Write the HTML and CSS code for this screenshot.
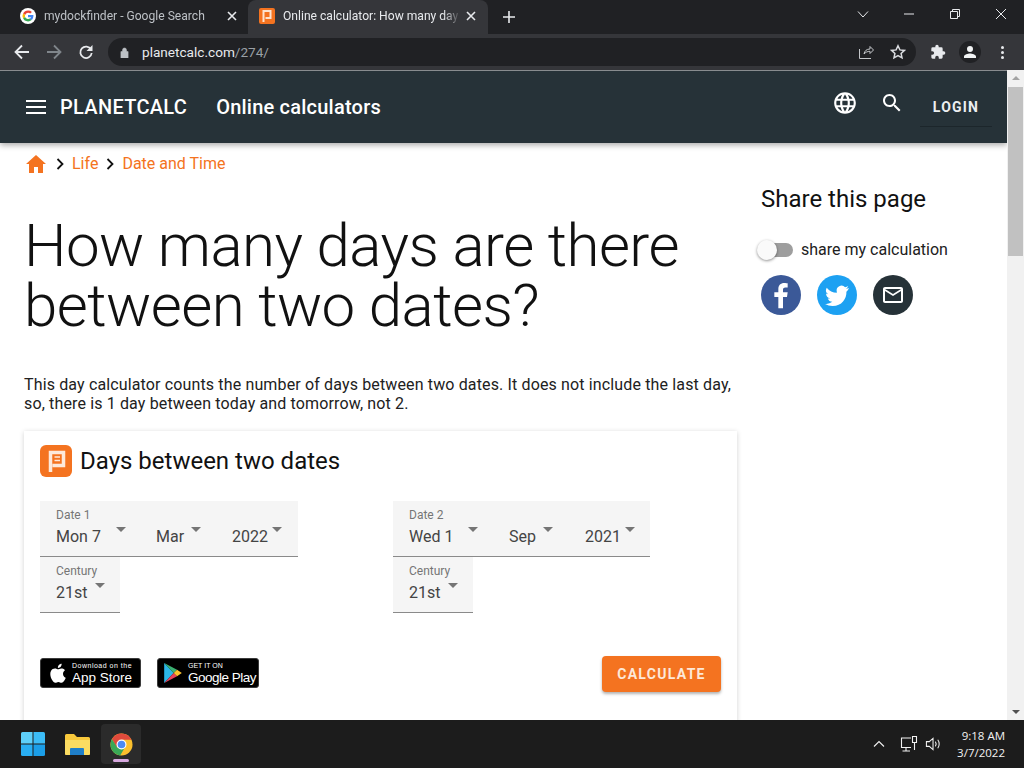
FILE: index.html
```html
<!DOCTYPE html>
<html>
<head lang="en">
    <meta charset="UTF-8">
    <title>Online calculator: How many days are there between two dates?</title>
    <link rel="stylesheet" href="styles.css">
</head>
<body>
<div class="tabbar">
    <div class="tab">
        <svg class="favicon" viewBox="0 0 16 16"><circle cx="8" cy="8" r="8" fill="#fff"/><path d="M8 2.500a5.500 5.500 0 0 0-4.900 3l2 1.600A3.300 3.300 0 0 1 8 4.700c.9 0 1.600.3 2.200.8l1.700-1.600A5.500 5.500 0 0 0 8 2.500z" fill="#ea4335"/><path d="M3.100 5.500a5.500 5.500 0 0 0 0 5l2-1.600a3.300 3.300 0 0 1 0-1.800z" fill="#fbbc05"/><path d="M3.100 10.500a5.500 5.500 0 0 0 8.600 1.500l-1.900-1.400a3.300 3.300 0 0 1-4.700-1.700z" fill="#34a853"/><path d="M13.400 7H8v2.200h3.100a2.600 2.600 0 0 1-1.300 1.400l1.900 1.400c1.100-1 1.800-2.600 1.700-5z" fill="#4285f4"/></svg>
        <span class="tab-title">mydockfinder - Google Search</span>
        <svg class="tab-x" viewBox="0 0 10 10"><path d="M1 1l8 8M9 1l-8 8"/></svg>
    </div>
    <div class="tab tab-on">
        <svg class="favicon" viewBox="0 0 16 16"><rect width="16" height="16" rx="2" fill="#f47320"/><path d="M4.500 14V3h7v7H6.500" fill="none" stroke="#fde3cf" stroke-width="2"/></svg>
        <span class="tab-title">Online calculator: How many day</span>
        <svg class="tab-x" viewBox="0 0 10 10"><path d="M1 1l8 8M9 1l-8 8"/></svg>
    </div>
    <svg class="newtab" viewBox="0 0 12 12"><path d="M6 0v12M0 6h12"/></svg>
    <div class="winbtns">
        <svg viewBox="0 0 12 12" class="win-chev"><path d="M1 3.500l5 5.500 5-5.500"/></svg>
        <svg viewBox="0 0 12 12" class="win-min"><path d="M1 6h10"/></svg>
        <svg viewBox="0 0 12 12" class="win-max"><path d="M1.500 3.500h7v7h-7zM3.500 3.500v-2h7v7h-2"/></svg>
        <svg viewBox="0 0 12 12" class="win-close"><path d="M1 1l10 10M11 1L1 11"/></svg>
    </div>
</div>

<div class="toolbar">
    <svg class="nav-ico" viewBox="0 0 16 16"><path d="M15 8H1.500M8 1.500L1.500 8 8 14.500"/></svg>
    <svg class="nav-ico nav-off" viewBox="0 0 16 16"><path d="M1 8h13.500M8 1.500L14.500 8 8 14.500"/></svg>
    <svg class="nav-ico" viewBox="0 0 16 16"><path d="M13 5.500A5.700 5.700 0 1 0 13.700 9"/><path class="nav-fill" d="M14.500 1v6h-6z"/></svg>
    <div class="omnibox">
        <svg class="lock" viewBox="0 0 10 12"><path d="M1 5h8v7H1zM2.800 5V3.200a2.200 2.200 0 0 1 4.400 0V5" /></svg>
        <span class="url">planetcalc.com<span class="url-path">/274/</span></span>
        <svg class="omni-share" viewBox="0 0 16 16"><path d="M1.500 5v9.500h11.500M6 10c.5-3 2.500-5 6-5V2.500L15.500 6 12 9.500V7.300c-2.500 0-4.500 1-6 2.700z"/></svg>
        <svg class="omni-star" viewBox="0 0 16 16"><path d="M8 1.800l1.900 4.100 4.500.5-3.300 3 .9 4.400L8 11.600l-4 2.200.9-4.400-3.300-3 4.500-.5z"/></svg>
    </div>
    <svg class="puzzle" viewBox="0 0 24 24"><path d="M20.500 11H19V7a2 2 0 0 0-2-2h-4V3.500a2.500 2.500 0 0 0-5 0V5H4a2 2 0 0 0-2 2v3.800h1.500a2.700 2.700 0 0 1 0 5.400H2V20a2 2 0 0 0 2 2h3.800v-1.500a2.700 2.700 0 0 1 5.400 0V22H17a2 2 0 0 0 2-2v-4h1.500a2.500 2.500 0 0 0 0-5z"/></svg>
    <div class="avatar"><svg viewBox="0 0 24 24"><path d="M12 12a4 4 0 1 0 0-8 4 4 0 0 0 0 8zm0 2c-2.700 0-8 1.300-8 4v2h16v-2c0-2.700-5.300-4-8-4z"/></svg></div>
    <div class="kebab"><i></i><i></i><i></i></div>
</div>

<div class="viewport">
    <div class="page">
        <header class="appbar">
            <svg class="burger" viewBox="0 0 20 14"><path d="M0 1h20M0 7h20M0 13h20"/></svg>
            <span class="brand">PLANETCALC</span>
            <span class="appbar-title">Online calculators</span>
            <svg class="globe" viewBox="0 0 24 24"><path d="M11.990 2C6.470 2 2 6.480 2 12s4.470 10 9.990 10C17.520 22 22 17.520 22 12S17.520 2 11.990 2zm6.930 6h-2.950c-.32-1.250-.78-2.450-1.380-3.560 1.840.63 3.370 1.910 4.330 3.560zM12 4.040c.83 1.200 1.480 2.530 1.910 3.960h-3.820c.43-1.430 1.080-2.760 1.910-3.960zM4.260 14C4.100 13.360 4 12.690 4 12s.1-1.360.26-2h3.380c-.08.66-.14 1.320-.14 2 0 .68.06 1.340.14 2H4.260zm.82 2h2.950c.32 1.250.78 2.450 1.380 3.560-1.840-.63-3.370-1.900-4.330-3.560zm2.950-8H5.080c.96-1.660 2.490-2.930 4.330-3.560C8.810 5.550 8.350 6.750 8.030 8zM12 19.960c-.83-1.200-1.480-2.530-1.910-3.960h3.820c-.43 1.430-1.080 2.760-1.910 3.960zM14.340 14H9.660c-.09-.66-.16-1.320-.16-2 0-.68.07-1.350.16-2h4.680c.09.65.16 1.320.16 2 0 .68-.07 1.340-.16 2zm.25 5.560c.6-1.110 1.060-2.310 1.380-3.560h2.950c-.96 1.650-2.490 2.930-4.330 3.560zM16.360 14c.08-.66.14-1.320.14-2 0-.68-.06-1.340-.14-2h3.380c.16.64.26 1.310.26 2s-.1 1.360-.26 2h-3.380z"/></svg>
            <svg class="search" viewBox="0 0 24 24"><path d="M15.500 14h-.79l-.28-.27C15.410 12.590 16 11.110 16 9.500 16 5.910 13.090 3 9.500 3S3 5.910 3 9.500 5.910 16 9.500 16c1.610 0 3.090-.59 4.230-1.570l.27.28v.79l5 4.990L20.490 19l-4.990-5zm-6 0C7.010 14 5 11.990 5 9.500S7.010 5 9.500 5 14 7.010 14 9.500 11.990 14 9.500 14z"/></svg>
            <span class="login">LOGIN</span>
        </header>

        <div class="content">
            <main class="main">
                <nav class="crumbs">
                    <svg class="home" viewBox="0 0 20 18"><path d="M8 18v-6h4v6h5V9h3L10 0 0 9h3v9z"/></svg>
                    <svg class="sep" viewBox="0 0 8 12"><path d="M1.500 1L6.500 6l-5 5"/></svg>
                    <a>Life</a>
                    <svg class="sep" viewBox="0 0 8 12"><path d="M1.500 1L6.500 6l-5 5"/></svg>
                    <a>Date and Time</a>
                </nav>
                <h1>How many days are there between two dates?</h1>
                <p class="intro">This day calculator counts the number of days between two dates. It does not include the last day, so, there is 1 day between today and tomorrow, not 2.</p>

                <section class="card">
                    <div class="card-head">
                        <svg class="card-logo" viewBox="0 0 32 32"><rect width="32" height="32" rx="6" fill="#f47320"/><path d="M10.500 27V7.500h13v13H12.500" fill="none" stroke="#fde9db" stroke-width="3.500"/><path d="M14.500 12h5.500M14.500 15.500h5.500" stroke="#fde9db" stroke-width="1.500"/></svg>
                        <h2>Days between two dates</h2>
                    </div>
                    <div class="dates">
                        <div class="date-col">
                            <div class="field">
                                <span class="lbl">Date 1</span>
                                <div class="vals">
                                    <span class="val val-day">Mon 7<i class="caret"></i></span>
                                    <span class="val val-mon">Mar<i class="caret"></i></span>
                                    <span class="val val-yr">2022<i class="caret"></i></span>
                                </div>
                            </div>
                            <div class="field field-small">
                                <span class="lbl">Century</span>
                                <div class="vals"><span class="val">21st<i class="caret"></i></span></div>
                            </div>
                        </div>
                        <div class="date-col">
                            <div class="field">
                                <span class="lbl">Date 2</span>
                                <div class="vals">
                                    <span class="val val-day">Wed 1<i class="caret"></i></span>
                                    <span class="val val-mon">Sep<i class="caret"></i></span>
                                    <span class="val val-yr">2021<i class="caret"></i></span>
                                </div>
                            </div>
                            <div class="field field-small">
                                <span class="lbl">Century</span>
                                <div class="vals"><span class="val">21st<i class="caret"></i></span></div>
                            </div>
                        </div>
                    </div>
                    <div class="card-foot">
                        <div class="badge badge-apple">
                            <svg viewBox="1 2 16 20"><path d="M14 12.700c0-2.300 1.900-3.400 2-3.500-1.100-1.600-2.800-1.800-3.400-1.800-1.400-.2-2.800.9-3.500.9s-1.900-.8-3.100-.8C4.400 7.500 2.900 8.400 2.100 9.800c-1.700 2.900-.4 7.200 1.200 9.500.8 1.200 1.800 2.400 3 2.400s1.700-.8 3.100-.8 1.900.8 3.100.8c1.300 0 2.100-1.100 2.900-2.300.9-1.300 1.300-2.600 1.300-2.700-.1 0-2.600-1-2.700-4zM11.700 5.700c.6-.8 1.100-1.900.9-3-.9 0-2.100.6-2.700 1.400-.6.700-1.100 1.800-1 2.800 1 .1 2.100-.5 2.800-1.200z"/></svg>
                            <div class="badge-text"><span class="badge-sm">Download on the</span><span class="badge-lg">App Store</span></div>
                        </div>
                        <div class="badge badge-play">
                            <svg viewBox="1 1.500 18.500 21"><path d="M1 1.500v21L11 12z" fill="#2bb6e8"/><path d="M1 1.500L11 12l3.500-3.500z" fill="#3bb273"/><path d="M1 22.500L11 12l3.500 3.500z" fill="#e8405a"/><path d="M14.500 8.500L11 12l3.500 3.500L19.500 12z" fill="#fbc02d"/></svg>
                            <div class="badge-text"><span class="badge-sm badge-caps">GET IT ON</span><span class="badge-lg">Google Play</span></div>
                        </div>
                        <button class="calc">CALCULATE</button>
                    </div>
                </section>
            </main>

            <aside class="side">
                <h3>Share this page</h3>
                <div class="share-toggle">
                    <span class="switch"><i></i></span>
                    <span>share my calculation</span>
                </div>
                <div class="socials">
                    <span class="social s-fb"><svg viewBox="0 0 24 24"><path d="M13.500 22v-8.500h3l.5-3.500h-3.500V8c0-1 .4-1.700 1.800-1.700H17V3.200c-.4 0-1.400-.2-2.600-.2-2.600 0-4.400 1.600-4.400 4.500V10H7v3.500h3V22z"/></svg></span>
                    <span class="social s-tw"><svg viewBox="0 0 24 24"><path d="M23 5.600c-.8.400-1.700.6-2.600.7.900-.6 1.600-1.400 2-2.500-.9.500-1.800.9-2.900 1.100A4.500 4.500 0 0 0 11.800 9c0 .4 0 .7.100 1A12.900 12.900 0 0 1 2.500 5.200a4.500 4.500 0 0 0 1.400 6c-.7 0-1.400-.2-2-.6 0 2.200 1.500 4 3.600 4.500-.7.200-1.400.2-2 .1.600 1.800 2.200 3.100 4.200 3.100A9.100 9.100 0 0 1 1 20.200 12.800 12.800 0 0 0 8 22.200c8.300 0 13-7 12.700-13.300.9-.8 1.700-1.500 2.300-3.300z"/></svg></span>
                    <span class="social s-mail"><svg viewBox="0 0 24 24"><path d="M20 4H4c-1.100 0-1.990.9-1.990 2L2 18c0 1.100.9 2 2 2h16c1.100 0 2-.9 2-2V6c0-1.100-.9-2-2-2zm0 14H4V8l8 5 8-5v10zm-8-7L4 6h16l-8 5z"/></svg></span>
                </div>
            </aside>
        </div>
    </div>

    <div class="scrollbar">
        <i class="arrow-up"></i>
        <div class="thumb"></div>
        <i class="arrow-down"></i>
    </div>
</div>

<footer class="taskbar">
    <svg class="start" viewBox="0 0 24 24"><path d="M0 1.500a1.500 1.500 0 0 1 1.500-1.500H11.500V11.500H0z" fill="#5ed0fa"/><path d="M12.500 0h10A1.500 1.500 0 0 1 24 1.500V11.500H12.500z" fill="#3cbdf7"/><path d="M0 12.500H11.500V24H1.500A1.500 1.500 0 0 1 0 22.500z" fill="#29aef2"/><path d="M12.500 12.500H24v10a1.500 1.500 0 0 1-1.500 1.500h-10z" fill="#1b9ee8"/></svg>
    <svg class="folder" viewBox="0 0 26 22"><path d="M1 2.500A1.500 1.500 0 0 1 2.500 1H10l3 3h11.500A1.500 1.500 0 0 1 26 5.500V20.500A1.500 1.500 0 0 1 24.500 22H2.500A1.500 1.500 0 0 1 1 20.500z" fill="#f8c93c"/><path d="M1 7h25v13.500a1.500 1.500 0 0 1-1.500 1.500h-22A1.500 1.500 0 0 1 1 20.500z" fill="#fbdc62"/><path d="M7 15h12a1 1 0 0 1 1 1v6H6v-6a1 1 0 0 1 1-1z" fill="#1f7fc9"/></svg>
    <div class="task-chrome">
        <svg viewBox="0 0 24 24"><circle cx="12" cy="12" r="11.500" fill="#fbc02d"/><path d="M12 .5a11.500 11.500 0 0 0-10 5.800L7 14.800 12 7h10.400A11.500 11.500 0 0 0 12 .5z" fill="#e04a3c"/><path d="M2 6.300A11.500 11.500 0 0 0 10.600 23.400L15.800 14.500 7.500 15z" fill="#3aa757"/><circle cx="12" cy="12" r="5.200" fill="#fff"/><circle cx="12" cy="12" r="4" fill="#4a8af4"/></svg>
        <i class="task-dot"></i>
    </div>
    <div class="tray">
        <svg class="tray-chev" viewBox="0 0 12 8"><path d="M1 6.500L6 1.500l5 5"/></svg>
        <svg class="tray-net" viewBox="0 0 18 18"><path d="M11 3H1.500v9.500h9.500M6 12.500V16M2.500 16H10M12.500 1.500h4v6h-4zM14.500 7.500V15"/></svg>
        <svg class="tray-vol" viewBox="0 0 18 16"><path d="M1.500 5.500h3l4-3.500v12l-4-3.500h-3zM11 5.500c1 1.500 1 3.500 0 5M13.500 3.500c2 2.500 2 6.500 0 9"/></svg>
        <div class="clock"><span>9:18 AM</span><span>3/7/2022</span></div>
    </div>
</footer>
</body>
</html>
```

FILE: styles.css
```css
*{
    box-sizing: border-box;
    margin: 0;
    padding: 0;
}
html, body{
    height: 768px;
    overflow: hidden;
}
body{
    display: flex;
    flex-direction: column;
    width: 1024px;
    font-family: Roboto, "Liberation Sans", sans-serif;
    background: #202124;
}
svg{
    display: block;
    flex: none;
}

/* browser tabs */
.tabbar{
    display: flex;
    align-items: flex-end;
    height: 34px;
    padding-left: 8px;
    background: #202124;
}
.tab{
    display: flex;
    align-items: center;
    width: 240px;
    height: 34px;
    padding: 0 4px 2px 12px;
    color: #bdc1c6;
    font-size: 12.1px;
}
.tab-on{
    padding: 0 5px 2px 11px;
    border-radius: 8px 8px 0 0;
    background: #35363a;
    color: #e8eaed;
}
.favicon{
    width: 16px;
    height: 16px;
    margin-right: 8px;
}
.tab-title{
    flex: 1;
    overflow: hidden;
    white-space: nowrap;
    -webkit-mask-image: linear-gradient(90deg, #000 90%, transparent);
    mask-image: linear-gradient(90deg, #000 90%, transparent);
}
.tab-x{
    width: 10px;
    height: 10px;
    margin: 0 7px 0 5px;
    fill: none;
    stroke: #e8eaed;
    stroke-width: 1.600;
}
.newtab{
    align-self: center;
    width: 12px;
    height: 12px;
    margin-left: 15px;
    fill: none;
    stroke: #e8eaed;
    stroke-width: 1.600;
}
.winbtns{
    display: flex;
    align-items: center;
    align-self: flex-start;
    margin-left: auto;
    height: 28px;
    padding-right: 17px;
}
.winbtns svg{
    width: 12px;
    height: 12px;
    fill: none;
    stroke: #e8eaed;
    stroke-width: 1;
}
.win-chev{
    margin-right: 34px;
}
.win-min{
    margin-right: 34px;
}
.win-max{
    margin-right: 34px;
}

/* address bar */
.toolbar{
    display: flex;
    align-items: center;
    height: 36px;
    padding-left: 14px;
    background: #35363a;
}
.nav-ico{
    width: 16px;
    height: 16px;
    margin-right: 16px;
    fill: none;
    stroke: #e8eaed;
    stroke-width: 1.800;
}
.nav-off{
    stroke: #80868b;
}
.nav-fill{
    fill: #e8eaed;
    stroke: none;
}
.omnibox{
    display: flex;
    align-items: center;
    width: 808px;
    height: 28px;
    margin-left: -2px;
    padding: 0 10px 0 12px;
    border-radius: 14px;
    background: #202124;
}
.lock{
    width: 9px;
    height: 11px;
    margin-right: 13px;
    fill: #bdc1c6;
    stroke: #bdc1c6;
    stroke-width: .6;
}
.url{
    flex: 1;
    color: #e8eaed;
    font-size: 13.6px;
}
.url-path{
    color: #9aa0a6;
}
.omni-share{
    width: 16px;
    height: 16px;
    margin-right: 16px;
    fill: none;
    stroke: #c4c7ca;
    stroke-width: 1;
}
.omni-star{
    width: 16px;
    height: 16px;
    fill: none;
    stroke: #dadce0;
    stroke-width: 1.500;
}
.puzzle{
    width: 16px;
    height: 16px;
    margin-left: 14px;
    fill: #e8eaed;
}
.avatar{
    display: flex;
    align-items: center;
    justify-content: center;
    width: 22px;
    height: 22px;
    margin-left: 13px;
    border-radius: 50%;
    background: #202124;
}
.avatar svg{
    width: 18px;
    height: 18px;
    fill: #f1f3f4;
}
.kebab{
    display: flex;
    flex-direction: column;
    gap: 2px;
    margin-left: 20px;
}
.kebab i{
    width: 3px;
    height: 3px;
    border-radius: 50%;
    background: #e8eaed;
}

/* page area */
.viewport{
    display: flex;
    height: 650px;
    overflow: hidden;
    background: #fff;
}
.page{
    flex: 1;
    min-width: 0;
    overflow: hidden;
}
.appbar{
    display: flex;
    align-items: center;
    height: 73px;
    padding: 0 15px 0 26px;
    background: #263238;
    color: #fff;
    box-shadow: 0 2px 6px rgba(0,0,0,.35);
    border-top: 1px solid #888c8f;
}
.burger{
    width: 20px;
    height: 14px;
    fill: none;
    stroke: #fff;
    stroke-width: 2;
}
.brand{
    margin-left: 14px;
    font-size: 20px;
    font-weight: 500;
    letter-spacing: .3px;
}
.appbar-title{
    margin-left: 29px;
    font-size: 20px;
    font-weight: 500;
    letter-spacing: .22px;
}
.globe{
    width: 26px;
    height: 26px;
    margin: -8px 0 0 auto;
    fill: #fff;
}
.search{
    width: 24px;
    height: 24px;
    margin: -8px 0 0 22px;
    fill: #fff;
}
.login{
    width: 72px;
    margin: 0 0 0 16px;
    padding: 12px 0 11px;
    border-bottom: 1px solid #1c262b;
    font-size: 14px;
    font-weight: 700;
    letter-spacing: 1.200px;
    text-align: center;
    color: #eceff1;
}
.content{
    display: flex;
}
.main{
    width: 737px;
    padding-left: 24px;
    flex: none;
}
.crumbs{
    display: flex;
    align-items: center;
    height: 40px;
    padding: 1px 0 0 2px;
    font-size: 16px;
    color: #f47320;
}
.home{
    width: 20px;
    height: 18px;
    margin-right: 10px;
    fill: #f47320;
}
.sep{
    width: 8px;
    height: 12px;
    margin-right: 8px;
    fill: none;
    stroke: #111;
    stroke-width: 1.800;
}
.crumbs a{
    margin-right: 8px;
}
h1{
    margin-top: 33px;
    font-size: 60px;
    line-height: 60px;
    font-weight: 300;
    color: #111;
    letter-spacing: -.55px;
}
.intro{
    margin-top: 39px;
    font-size: 16px;
    line-height: 19px;
    letter-spacing: .14px;
    color: #212121;
}
.card{
    height: 340px;
    margin-top: 18px;
    padding: 14px 16px;
    background: #fff;
    box-shadow: 0 1px 5px rgba(0,0,0,.18);
}
.card-head{
    display: flex;
    align-items: center;
    height: 32px;
}
.card-logo{
    width: 32px;
    height: 32px;
    margin-right: 8px;
}
h2{
    font-size: 24px;
    font-weight: 400;
    color: #111;
}
.dates{
    display: flex;
    margin-top: 24px;
}
.date-col{
    display: flex;
    flex-direction: column;
    align-items: flex-start;
    flex: none;
    width: 353px;
}
.field{
    width: 258px;
    height: 56px;
    padding: 7px 0 0 16px;
    background: #f5f5f5;
    border-bottom: 1px solid #8a8a8a;
    color: #444;
}
.date-col:last-child .field:first-child{
    width: 257px;
}
.field-small, .date-col:last-child .field-small{
    width: 80px;
}
.lbl{
    display: block;
    font-size: 12px;
    line-height: 14px;
    color: #757575;
}
.vals{
    display: flex;
    margin-top: 4px;
    font-size: 16px;
    line-height: 22px;
}
.val{
    display: flex;
}
.val-day{
    width: 100px;
}
.val-mon{
    width: 76px;
}
.caret{
    width: 0;
    height: 0;
    margin: 1px 0 0 8px;
    border-left: 5px solid transparent;
    border-right: 5px solid transparent;
    border-top: 5px solid #757575;
}
.val-day .caret{
    margin-left: 15px;
}
.val-mon .caret{
    margin-left: 7px;
}
.val-yr .caret{
    margin-left: 4px;
}
.card-foot{
    display: flex;
    align-items: flex-start;
    margin-top: 43px;
}
.badge{
    display: flex;
    align-items: center;
    height: 30px;
    margin-top: 2px;
    padding-left: 9px;
    border: 1px solid #3a3a3a;
    border-radius: 3px;
    background: #000;
    color: #fff;
}
.badge svg{
    height: 20px;
    margin-right: 6px;
    fill: #fff;
}
.badge-apple{
    width: 101px;
}
.badge-apple svg{
    width: 16px;
}
.badge-play{
    width: 102px;
    margin-left: 16px;
    padding-left: 6px;
}
.badge-play svg{
    width: 18px;
}
.badge-text{
    display: flex;
    flex-direction: column;
    white-space: nowrap;
}
.badge-sm{
    font-family: "Liberation Sans", sans-serif;
    font-size: 7px;
    line-height: 8px;
    letter-spacing: .5px;
}
.badge-caps{
    letter-spacing: 0;
}
.badge-lg{
    font-family: "Liberation Sans", sans-serif;
    font-size: 13.5px;
    line-height: 15px;
}
.badge-play .badge-lg{
    letter-spacing: -.5px;
}
.calc{
    width: 119px;
    height: 36px;
    margin-left: auto;
    border: 0;
    border-radius: 4px;
    background: #f47320;
    color: #fde8d8;
    font-family: Roboto, "Liberation Sans", sans-serif;
    font-size: 14px;
    font-weight: 700;
    letter-spacing: 1.300px;
    box-shadow: 0 2px 3px rgba(0,0,0,.3);
}

/* share column */
.side{
    padding: 42px 0 0 24px;
    color: #111;
}
h3{
    font-size: 24px;
    line-height: 28px;
    font-weight: 400;
}
.share-toggle{
    display: flex;
    align-items: center;
    gap: 8px;
    margin-top: 27px;
    margin-left: 2px;
    font-size: 16px;
    color: #212121;
}
.switch{
    display: block;
    position: relative;
    width: 30px;
    height: 14px;
    border-radius: 7px;
    background: #9e9e9e;
}
.switch i{
    position: absolute;
    left: -6px;
    top: -3px;
    width: 20px;
    height: 20px;
    border-radius: 50%;
    background: #fafafa;
    box-shadow: 0 1px 3px rgba(0,0,0,.45);
}
.socials{
    display: flex;
    gap: 16px;
    margin-top: 16px;
}
.social{
    display: flex;
    align-items: center;
    justify-content: center;
    width: 40px;
    height: 40px;
    border-radius: 50%;
}
.social svg{
    width: 26px;
    height: 26px;
    fill: #fff;
}
.s-fb{
    background: #3b5998;
}
.s-fb svg{
    width: 32px;
    height: 32px;
}
.s-tw{
    background: #1da1f2;
}
.s-mail{
    background: #263238;
}
.s-mail svg{
    width: 24px;
    height: 24px;
}

/* scrollbar */
.scrollbar{
    display: flex;
    flex-direction: column;
    align-items: center;
    flex: none;
    width: 17px;
    background: #f1f1f1;
}
.arrow-up, .arrow-down{
    width: 0;
    height: 0;
    margin: 6px 0;
    border-left: 4px solid transparent;
    border-right: 4px solid transparent;
}
.arrow-up{
    border-bottom: 4px solid #a3a3a3;
}
.arrow-down{
    margin-top: auto;
    border-top: 4px solid #505050;
}
.thumb{
    width: 15px;
    height: 169px;
    margin-top: 1px;
    background: #c1c1c1;
}

/* windows taskbar */
.taskbar{
    display: flex;
    align-items: center;
    height: 48px;
    padding-left: 21px;
    background: #1c1c1c;
    color: #f2f2f2;
}
.start{
    width: 24px;
    height: 24px;
}
.folder{
    width: 26px;
    height: 22px;
    margin-left: 19px;
}
.task-chrome{
    display: flex;
    flex-direction: column;
    align-items: center;
    width: 40px;
    height: 40px;
    margin-left: 11px;
    padding-top: 9px;
    border-radius: 4px;
    background: #2b2b2b;
}
.task-chrome svg{
    width: 23px;
    height: 23px;
}
.task-dot{
    width: 16px;
    height: 3px;
    margin-top: 3px;
    border-radius: 2px;
    background: #d8a9e0;
}
.tray{
    display: flex;
    align-items: center;
    margin-left: auto;
    padding-right: 19px;
}
.tray svg{
    fill: none;
    stroke: #f2f2f2;
    stroke-width: 1.100;
}
.tray-chev{
    width: 12px;
    height: 8px;
}
.tray-net{
    width: 18px;
    height: 18px;
    margin-left: 15px;
}
.tray-vol{
    width: 17px;
    height: 16px;
    margin-left: 7px;
}
.clock{
    display: flex;
    flex-direction: column;
    align-items: flex-end;
    margin-left: 15px;
    font-family: "Open Sans", "Liberation Sans", sans-serif;
    font-size: 11.500px;
    line-height: 17px;
}
```
